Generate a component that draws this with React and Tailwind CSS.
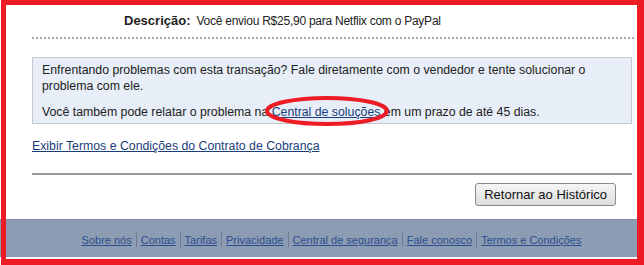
const FOOTER_LINKS = [
  "Sobre nós",
  "Contas",
  "Tarifas",
  "Privacidade",
  "Central de segurança",
  "Fale conosco",
  "Termos e Condições",
];

export default function App() {
  return (
    <div
      className="relative w-[644px] h-[265px] bg-white overflow-hidden text-[12.3px] leading-4 text-[#222]"
      style={{ fontFamily: '"Liberation Sans", Arial, sans-serif' }}
    >
      <div className="flex flex-col h-[257px]">
        {/* Main content */}
        <div className="flex-1 pl-[32px] pr-[12px]">
          <div className="pt-[13px] pl-[92px] flex items-baseline gap-[6px]">
            <span className="font-bold text-[13px]">Descrição:</span>
            <span className="text-[12px] tracking-[-0.25px]">Você enviou R$25,90 para Netflix com o PayPal</span>
          </div>
          <div className="mt-[8px] border-b-2 border-dotted border-[#a7a7a7] mr-[-2px]" />

          {/* Info box */}
          <div className="mt-[18px] border border-[#c8c8c8] bg-[#e8eef8] pl-[9px] pr-[20px] pt-[4px] pb-[3px]">
            <p>
              Enfrentando problemas com esta transação? Fale diretamente com o vendedor e tente solucionar o
              problema com ele.
            </p>
            <p className="mt-[10px]">
              Você também pode relatar o problema na{" "}
              <a href="#" className="text-[#1a3d7c] underline">Central de soluções</a> em um prazo de até 45 dias.
            </p>
          </div>

          <a href="#" className="block mt-[14px] text-[#1a3d7c] underline w-fit">
            Exibir Termos e Condições do Contrato de Cobrança
          </a>

          <div className="mt-[19px] h-[2px] bg-[#9a9a9a]" />

          <div className="flex justify-end pr-[16px] mt-[8px]">
            <button
              type="button"
              className="h-[23px] px-[8px] border border-[#8a8a8a] rounded-[3px] bg-gradient-to-b from-[#f6f6f6] to-[#dddddd] text-[13px] text-[#111]"
            >
              Retornar ao Histórico
            </button>
          </div>
        </div>

        {/* Footer */}
        <div className="h-[38px] w-[637px] bg-[#8b9cb3] border-t border-[#7f8ea4] flex items-center justify-center pl-[26px] pt-[2px] text-[11px]">
          {FOOTER_LINKS.map((label, i) => (
            <span key={label} className="flex items-center">
              {i > 0 && <span className="mx-[4px] w-px h-[15px] bg-[#6d7c93]" />}
              <a href="#" className="text-[#2d4d8e] underline">{label}</a>
            </span>
          ))}
        </div>
      </div>

      {/* Red annotation frame */}
      <div className="absolute left-[1px] top-0 w-[643px] h-[265px] border-l-[5px] border-t-[5px] border-r-[7px] border-b-[6px] border-[#ed1c24] pointer-events-none" />

      {/* Red annotation ellipse */}
      <svg className="absolute left-0 top-0 pointer-events-none" width="644" height="265">
        <ellipse cx="327" cy="111" rx="60" ry="13" fill="none" stroke="#ed1c24" strokeWidth="4" />
      </svg>
    </div>
  );
}
